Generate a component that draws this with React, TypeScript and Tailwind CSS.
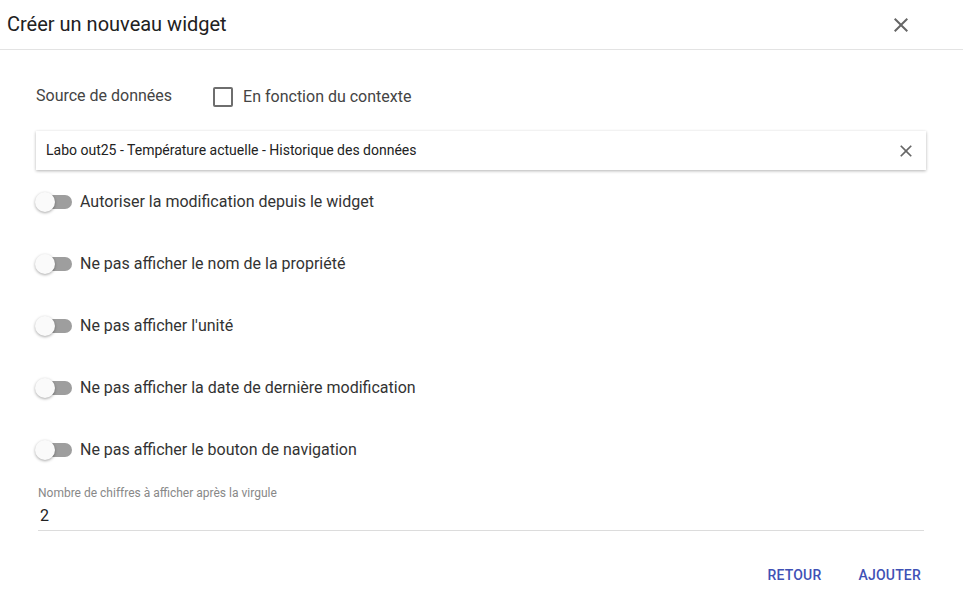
import React from "react";

const CloseIcon = ({ size, className }: { size: number; className?: string }) => (
  <svg width={size} height={size} viewBox="0 0 24 24" className={className} fill="currentColor">
    <path d="M19 6.41L17.59 5 12 10.59 6.41 5 5 6.41 10.59 12 5 17.59 6.41 19 12 13.41 17.59 19 19 17.59 13.41 12z" />
  </svg>
);

const Switch = () => (
  <div className="relative w-[36px] h-[20px] flex items-center">
    <div className="absolute left-[2px] right-0 h-[14px] rounded-full bg-[#9e9e9e]" />
    <div className="absolute left-[-1px] w-[20px] h-[20px] rounded-full bg-[#fafafa] shadow-[0_1px_3px_rgba(0,0,0,0.35)]" />
  </div>
);

const rows = [
  "Autoriser la modification depuis le widget",
  "Ne pas afficher le nom de la propriété",
  "Ne pas afficher l'unité",
  "Ne pas afficher la date de dernière modification",
  "Ne pas afficher le bouton de navigation",
];

export default function App() {
  return (
    <div className="w-[963px] h-[605px] bg-white overflow-hidden" style={{ fontFamily: "Roboto, 'Liberation Sans', sans-serif" }}>
      <div className="h-[50px] border-b border-[#e3e3e3] flex items-center justify-between pl-[7px] pr-[50px]">
        <div className="text-[20px] text-[#212121] leading-none pb-[2px]">Créer un nouveau widget</div>
        <CloseIcon size={24} className="text-[#666]" />
      </div>
      <div className="pl-[36px] pr-[37px]">
        <div className="pt-[35px] flex items-center h-[59px]">
          <span className="text-[16px] text-[#444] leading-[24px] -mt-[2px]">Source de données</span>
          <div className="ml-[41px] w-[20px] h-[20px] border-2 border-[#6e6e6e] rounded-[2px]" />
          <span className="ml-[10px] text-[16px] text-[#444] leading-[24px]">En fonction du contexte</span>
        </div>
        <div className="mt-[22px] h-[39px] bg-white shadow-[0_1px_3px_rgba(0,0,0,0.3)] flex items-center justify-between pl-[10px] pr-[10px]">
          <span className="text-[14px] text-[#222]">Labo out25 - Température actuelle - Historique des données</span>
          <CloseIcon size={20} className="text-[#666]" />
        </div>
        <div className="mt-[1px]">
          {rows.map((r) => (
            <div key={r} className="h-[62px] flex items-center">
              <Switch />
              <span className="ml-[8px] text-[16px] text-[#333] leading-[24px]">{r}</span>
            </div>
          ))}
        </div>
        <div className="pl-[2px] pr-[2px]">
          <div className="mt-[5px] text-[12px] leading-[14px] text-[#888]">Nombre de chiffres à afficher après la virgule</div>
          <div className="mt-[4px] text-[16px] leading-[24px] text-[#222] pl-[2px]">2</div>
          <div className="mt-[2px] h-px bg-[#dcdcdc]" />
        </div>
      </div>
      <div className="mt-[26px] flex justify-end pr-[34px] gap-[21px]">
        <button className="h-[36px] px-[8px] text-[14px] font-medium uppercase tracking-[0.2px] text-[#3f51b5]">Retour</button>
        <button className="h-[36px] px-[8px] text-[14px] font-medium uppercase tracking-[0.2px] text-[#3f51b5]">Ajouter</button>
      </div>
    </div>
  );
}
